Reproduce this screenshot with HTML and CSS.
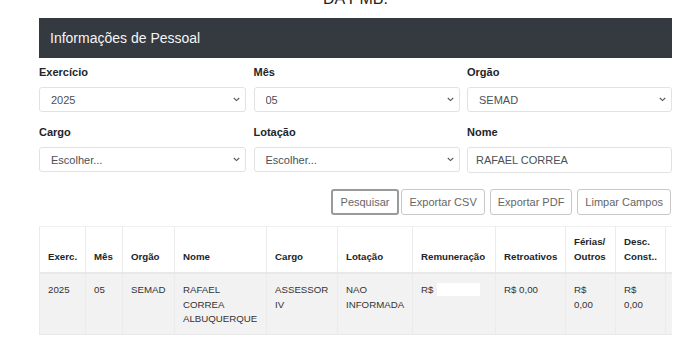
FILE: index.html
```html
<!DOCTYPE html>
<html lang="pt-BR">
    <head>
        <meta charset="utf-8" />
        <meta name="viewport" content="width=device-width, initial-scale=1">
        <title>Informações de Pessoal</title>
        <link rel="stylesheet" href="styles.css">
    </head>
    <body>
        <div class="page">
            <!-- titulo da pagina (so a ultima linha aparece) -->
            <h1 class="page_title">DA PMB.</h1>

            <div class="card">
                <div class="card_header">Informações de Pessoal</div>

                <!-- filtros -->
                <form class="filters" onsubmit="return false;">
                    <div class="field">
                        <label>Exercício</label>
                        <div class="select_box">
                            <select><option>2025</option></select>
                            <svg class="chevron" width="7" height="5" viewBox="0 0 7 5"><path d="M0.8 1 L3.5 3.6 L6.2 1" fill="none" stroke="#555" stroke-width="1.1"/></svg>
                        </div>
                    </div>
                    <div class="field">
                        <label>Mês</label>
                        <div class="select_box">
                            <select><option>05</option></select>
                            <svg class="chevron" width="7" height="5" viewBox="0 0 7 5"><path d="M0.8 1 L3.5 3.6 L6.2 1" fill="none" stroke="#555" stroke-width="1.1"/></svg>
                        </div>
                    </div>
                    <div class="field">
                        <label>Orgão</label>
                        <div class="select_box">
                            <select><option>SEMAD</option></select>
                            <svg class="chevron" width="7" height="5" viewBox="0 0 7 5"><path d="M0.8 1 L3.5 3.6 L6.2 1" fill="none" stroke="#555" stroke-width="1.1"/></svg>
                        </div>
                    </div>
                    <div class="field">
                        <label>Cargo</label>
                        <div class="select_box">
                            <select><option>Escolher...</option></select>
                            <svg class="chevron" width="7" height="5" viewBox="0 0 7 5"><path d="M0.8 1 L3.5 3.6 L6.2 1" fill="none" stroke="#555" stroke-width="1.1"/></svg>
                        </div>
                    </div>
                    <div class="field">
                        <label>Lotação</label>
                        <div class="select_box">
                            <select><option>Escolher...</option></select>
                            <svg class="chevron" width="7" height="5" viewBox="0 0 7 5"><path d="M0.8 1 L3.5 3.6 L6.2 1" fill="none" stroke="#555" stroke-width="1.1"/></svg>
                        </div>
                    </div>
                    <div class="field">
                        <label>Nome</label>
                        <input type="text" class="text_input" value="RAFAEL CORREA">
                    </div>
                </form>

                <!-- botoes -->
                <div class="actions">
                    <button class="btn btn_focus">Pesquisar</button>
                    <button class="btn">Exportar CSV</button>
                    <button class="btn">Exportar PDF</button>
                    <button class="btn">Limpar Campos</button>
                </div>

                <!-- resultado (a tabela continua alem da borda) -->
                <div class="table_wrap">
                    <table class="results">
                        <thead>
                            <tr>
                                <th class="c_exerc">Exerc.</th>
                                <th class="c_mes">Mês</th>
                                <th class="c_orgao">Orgão</th>
                                <th class="c_nome">Nome</th>
                                <th class="c_cargo">Cargo</th>
                                <th class="c_lotacao">Lotação</th>
                                <th class="c_remun">Remuneração</th>
                                <th class="c_retro">Retroativos</th>
                                <th class="c_ferias">Férias/ Outros</th>
                                <th class="c_desc">Desc. Const..</th>
                                <th class="c_total"></th>
                            </tr>
                        </thead>
                        <tbody>
                            <tr>
                                <td>2025</td>
                                <td>05</td>
                                <td>SEMAD</td>
                                <td>RAFAEL CORREA ALBUQUERQUE</td>
                                <td>ASSESSOR IV</td>
                                <td>NAO INFORMADA</td>
                                <td>R$ <span class="hidden_value"></span></td>
                                <td>R$ 0,00</td>
                                <td>R$ 0,00</td>
                                <td>R$ 0,00</td>
                                <td></td>
                            </tr>
                        </tbody>
                    </table>
                </div>
            </div>
        </div>
    </body>
</html>
```

FILE: styles.css
```css
body {
    margin: 0;
    font-family: "Liberation Sans", Arial, sans-serif;
    background-color: #fff;
    color: #212529;
}

.page {
    width: 633px;
    padding-left: 39px;
}

/* titulo da pagina */
.page_title {
    margin: -11px 0 0 0;
    font-size: 16px;
    font-weight: normal;
    line-height: 19px;
    text-align: center;
    color: #222;
}

/* cabecalho escuro */
.card_header {
    margin-top: 10px;
    height: 40px;
    display: flex;
    align-items: center;
    padding-left: 11px;
    background-color: #343a40;
    color: #f4f5f6;
    font-size: 14px;
}

/* filtros */
.filters {
    display: grid;
    grid-template-columns: 207px 206px 205px;
    column-gap: 7.5px;
    row-gap: 13px;
    margin-top: 7px;
}

.field {
    display: flex;
    flex-direction: column;
    gap: 7px;
}

.field label {
    font-size: 11px;
    font-weight: bold;
    line-height: 15px;
    color: #212529;
}

.select_box {
    position: relative;
}

.select_box select,
.text_input {
    box-sizing: border-box;
    width: 100%;
    height: 25px;
    border: 1px solid #e2e2e2;
    border-radius: 3px;
    background-color: #fff;
    font-family: "Liberation Sans", Arial, sans-serif;
    font-size: 11px;
    color: #495057;
    outline: none;
}

.select_box select {
    appearance: none;
    -webkit-appearance: none;
    padding: 0 20px 0 11px;
}

.text_input {
    padding: 0 8px;
    height: 26px;
}

.chevron {
    position: absolute;
    right: 6px;
    top: 10px;
}

/* botoes */
.actions {
    display: flex;
    justify-content: flex-end;
    gap: 5px;
    margin-top: 16px;
    padding-right: 1px;
}

.btn {
    height: 26px;
    padding: 0 7px;
    border: 1px solid #c8c8c8;
    border-radius: 3px;
    background-color: #fff;
    font-family: "Liberation Sans", Arial, sans-serif;
    font-size: 11px;
    color: #666;
}

.btn_focus {
    border: 2px solid #9a9a9a;
    padding: 0 8px;
    margin-right: -3px;
}

/* tabela */
.table_wrap {
    margin-top: 11px;
    overflow: hidden;
}

.results {
    border-collapse: collapse;
    table-layout: fixed;
    width: 696px;
    font-size: 9.7px;
    line-height: 14.5px;
}

.results th,
.results td {
    box-sizing: border-box;
    padding: 9px 8px 8px 8px;
    border-right: 1px solid #ebebeb;
    text-align: left;
    vertical-align: top;
}

.results th:first-child,
.results td:first-child {
    border-left: 1px solid #ebebeb;
}

.results thead th {
    vertical-align: bottom;
    font-weight: bold;
    color: #212529;
    border-top: 1px solid #efefef;
    border-bottom: 2px solid #e8e8e8;
    padding: 8px 8px 8px 8px;
}

.results tbody td {
    background-color: #f2f2f2;
    color: #333;
    border-bottom: 1px solid #e8e8e8;
    padding-top: 9px;
    padding-bottom: 7px;
}

.c_exerc { width: 46px; }
.c_mes { width: 37px; }
.c_orgao { width: 52px; }
.c_nome { width: 92px; }
.c_cargo { width: 71px; }
.c_lotacao { width: 75px; }
.c_remun { width: 83px; }
.c_retro { width: 70px; }
.c_ferias { width: 50px; }
.c_desc { width: 50px; }
.c_total { width: 70px; }

.hidden_value {
    display: inline-block;
    width: 43px;
    height: 13px;
    margin-left: 1px;
    vertical-align: -3px;
    background-color: #fff;
}
```
